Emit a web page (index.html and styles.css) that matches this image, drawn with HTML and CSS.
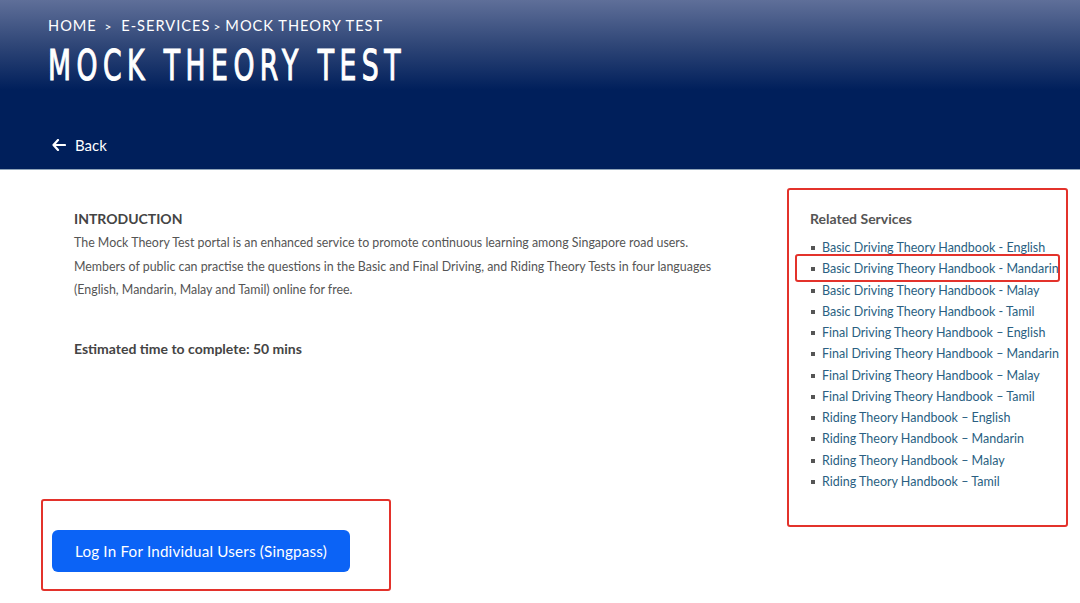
FILE: index.html
```html
<!DOCTYPE html>
<html lang="en">
<head>
  <meta charset="UTF-8" />
  <title>Mock Theory Test</title>
  <link rel="stylesheet" href="styles.css">
</head>
<body>
  <header class="banner">
    <div class="crumbs">HOME <span class="sep">&gt;</span> E-SERVICES<span class="sep">&gt;</span>MOCK THEORY TEST</div>
    <h1 class="title"><span>MOCK THEORY TEST</span></h1>
    <a class="back" href="#">
      <svg width="14" height="12" viewBox="0 0 14 12"><path d="M6 1 1.5 6 6 11M2 6h11" fill="none" stroke="#fff" stroke-width="2.2" stroke-linecap="round" stroke-linejoin="round"/></svg>
      <span>Back</span>
    </a>
  </header>

  <main class="page">
    <div class="main-col">
      <section class="intro">
        <h3>INTRODUCTION</h3>
        <p>The Mock Theory Test portal is an enhanced service to promote continuous learning among Singapore road users.<br>
        Members of public can practise the questions in the Basic and Final Driving, and Riding Theory Tests in four languages<br>
        (English, Mandarin, Malay and Tamil) online for free.</p>
        <p class="estimate">Estimated time to complete: 50 mins</p>
      </section>

      <div class="mark login-box">
        <a class="btn-login" href="#">Log In For Individual Users (Singpass)</a>
      </div>
    </div>

    <aside class="mark related">
      <h4>Related Services</h4>
      <ul>
        <li><a href="#">Basic Driving Theory Handbook - English</a></li>
        <li class="picked"><a href="#">Basic Driving Theory Handbook - Mandarin</a></li>
        <li><a href="#">Basic Driving Theory Handbook - Malay</a></li>
        <li><a href="#">Basic Driving Theory Handbook - Tamil</a></li>
        <li><a href="#">Final Driving Theory Handbook – English</a></li>
        <li><a href="#">Final Driving Theory Handbook – Mandarin</a></li>
        <li><a href="#">Final Driving Theory Handbook – Malay</a></li>
        <li><a href="#">Final Driving Theory Handbook – Tamil</a></li>
        <li><a href="#">Riding Theory Handbook – English</a></li>
        <li><a href="#">Riding Theory Handbook – Mandarin</a></li>
        <li><a href="#">Riding Theory Handbook – Malay</a></li>
        <li><a href="#">Riding Theory Handbook – Tamil</a></li>
      </ul>
    </aside>
  </main>
</body>
</html>
```

FILE: styles.css
```css
body { margin: 0; font-family: Lato, "Open Sans", sans-serif; background: #fff; color: #555; }
a { text-decoration: none; }

.banner { height: 169px; border-bottom: 1px solid #8fa3b8; padding-left: 48px; box-sizing: content-box;
  background: linear-gradient(to bottom, #5f6f99 0, #2f4677 45px, #001f5b 90px, #001f5b 100%); color: #fff; }
.crumbs { padding-top: 16px; font-size: 14.6px; letter-spacing: 1px; line-height: 20px; }
.crumbs .sep { font-size: 12px; margin: 0 4px 0 3px; }
.title { margin: 3px 0 0; font-family: "DejaVu Sans", sans-serif; font-weight: normal;
  font-size: 43px; letter-spacing: 8.8px; line-height: 50px; white-space: nowrap; }
.title span { display: inline-block; transform: scaleX(0.62); transform-origin: left center; -webkit-text-stroke: 1.2px #fff; }
.back { display: flex; align-items: center; gap: 9px; margin: 46px 0 0 4px; color: #fff; font-size: 15px; }

.page { display: flex; padding: 18px 12px 0 41px; }
.main-col { flex: 1; }

.mark { border: 2px solid #e3322b; border-radius: 3px; }

.intro { padding: 19px 0 0 33px; }
.intro h3 { margin: 0; font-size: 14px; font-weight: bold; color: #444; line-height: 24px; }
.intro p { margin: 0; font-size: 12.4px; line-height: 23.5px; color: #555; }
.intro .estimate { margin-top: 35px; font-size: 14px; font-weight: bold; color: #444; }

.login-box { width: 350px; height: 92px; margin-top: 139px; padding: 29px 0 0 9px; box-sizing: border-box; }
.btn-login { display: flex; align-items: center; justify-content: center; width: 298px; height: 42px;
  background: #0b63f6; border-radius: 6px; color: #fff; font-size: 15.2px; letter-spacing: 0.2px; }

.related { width: 281px; height: 339px; box-sizing: border-box; padding: 17px 0 0 21px; }
.related h4 { margin: 0; font-size: 14px; font-weight: bold; color: #555; line-height: 24px; }
.related ul { list-style: none; margin: 6px 0 0; padding: 0; }
.related li { position: relative; padding-left: 12px; font-size: 12.5px; line-height: 21.27px; }
.related li::before { content: ""; position: absolute; left: 1px; top: 9px; width: 4px; height: 4px; background: #555; }
.related a { color: #2a5f82; }
/* annotation frame drawn over the picked link */
.related li.picked::after { content: ""; position: absolute; left: -15px; top: -4px; width: 265px; height: 28px;
  box-sizing: border-box; border: 2px solid #e3322b; border-radius: 3px; }
```
